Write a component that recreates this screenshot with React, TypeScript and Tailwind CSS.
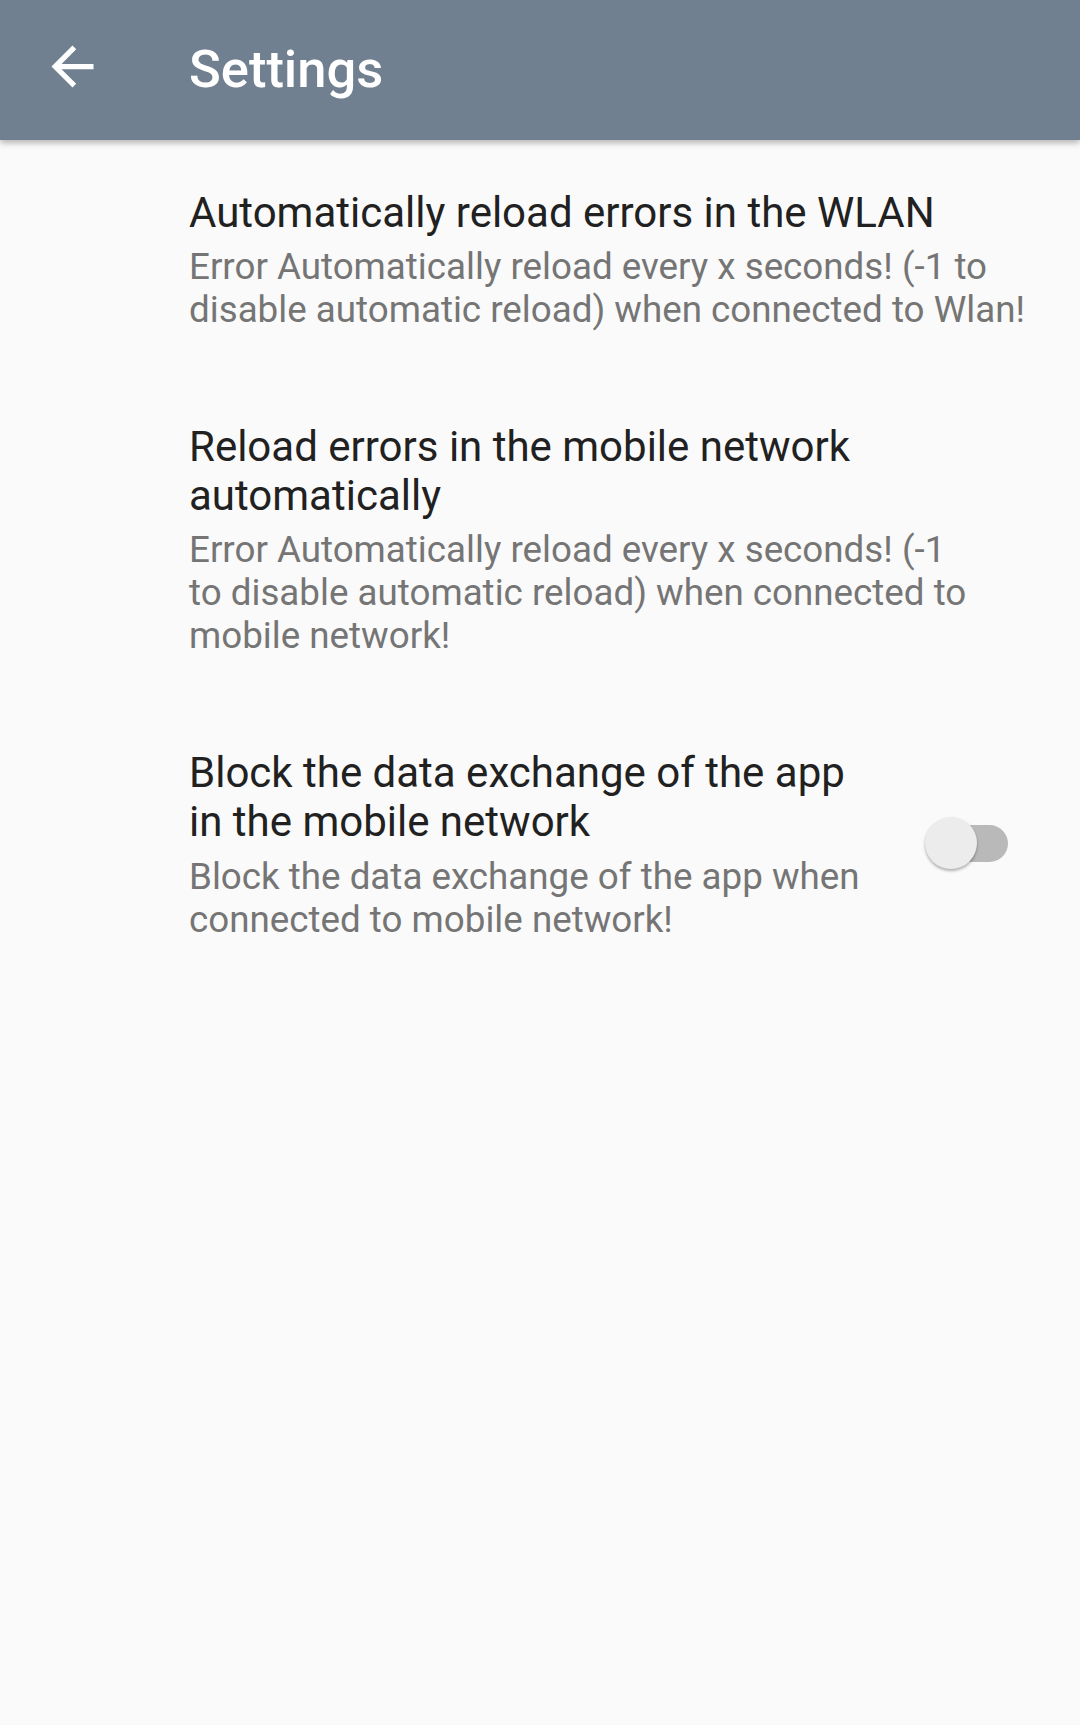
const items = [
  {
    title: ["Automatically reload errors in the WLAN"],
    summary: [
      "Error Automatically reload every x seconds! (-1 to",
      "disable automatic reload) when connected to Wlan!",
    ],
  },
  {
    title: ["Reload errors in the mobile network", "automatically"],
    summary: [
      "Error Automatically reload every x seconds! (-1",
      "to disable automatic reload) when connected to",
      "mobile network!",
    ],
  },
]

function Lines({ lines }: { lines: string[] }) {
  return (
    <>
      {lines.map((l, i) => (
        <span key={i} className="block whitespace-nowrap">
          {l}
        </span>
      ))}
    </>
  )
}

function PrefText({ title, summary }: { title: string[]; summary: string[] }) {
  return (
    <div className="flex flex-col">
      <div className="text-[42px] leading-[49.2px] text-[#212121]">
        <Lines lines={title} />
      </div>
      <div className="mt-[8px] text-[36.75px] leading-[43px] text-[#757575]">
        <Lines lines={summary} />
      </div>
    </div>
  )
}

function Switch() {
  return (
    <div className="relative h-[54px] w-[83px] shrink-0">
      <div className="absolute right-0 top-[8px] h-[37px] w-[76px] rounded-full bg-[#b9b9b9]" />
      <div className="absolute left-0 top-0 h-[52px] w-[52px] rounded-full bg-[#ececec] shadow-[0_2px_3px_rgba(0,0,0,0.3)]" />
    </div>
  )
}

export default function App() {
  return (
    <div className="min-h-[1725px] w-[1080px] bg-[#fafafa] font-['Roboto',sans-serif]">
      <header className="relative z-10 flex h-[140px] items-start bg-[#708090] shadow-[0_3px_6px_rgba(0,0,0,0.28)]">
        <button type="button" aria-label="Back" className="ml-[41px] mt-[35px] h-[63px] w-[63px] text-white">
          <svg width="63" height="63" viewBox="0 0 24 24" fill="currentColor" aria-hidden="true">
            <path d="M20 11H7.83l5.59-5.59L12 4l-8 8 8 8 1.41-1.41L7.83 13H20v-2z" />
          </svg>
        </button>
        <h1 className="ml-[85px] mt-[43px] text-[52.5px] font-medium leading-none text-white">
          Settings
        </h1>
      </header>

      <main className="flex flex-col pt-[2px]">
        {items.map((item, i) => (
          <div key={i} className="py-[45.5px] pl-[189px]">
            <PrefText title={item.title} summary={item.summary} />
          </div>
        ))}

        {/* Switch row */}
        <div className="flex items-center py-[45.5px] pl-[189px] pr-[72px]">
          <PrefText
            title={["Block the data exchange of the app", "in the mobile network"]}
            summary={["Block the data exchange of the app when", "connected to mobile network!"]}
          />
          <div className="ml-auto">
            <Switch />
          </div>
        </div>
      </main>
    </div>
  )
}
